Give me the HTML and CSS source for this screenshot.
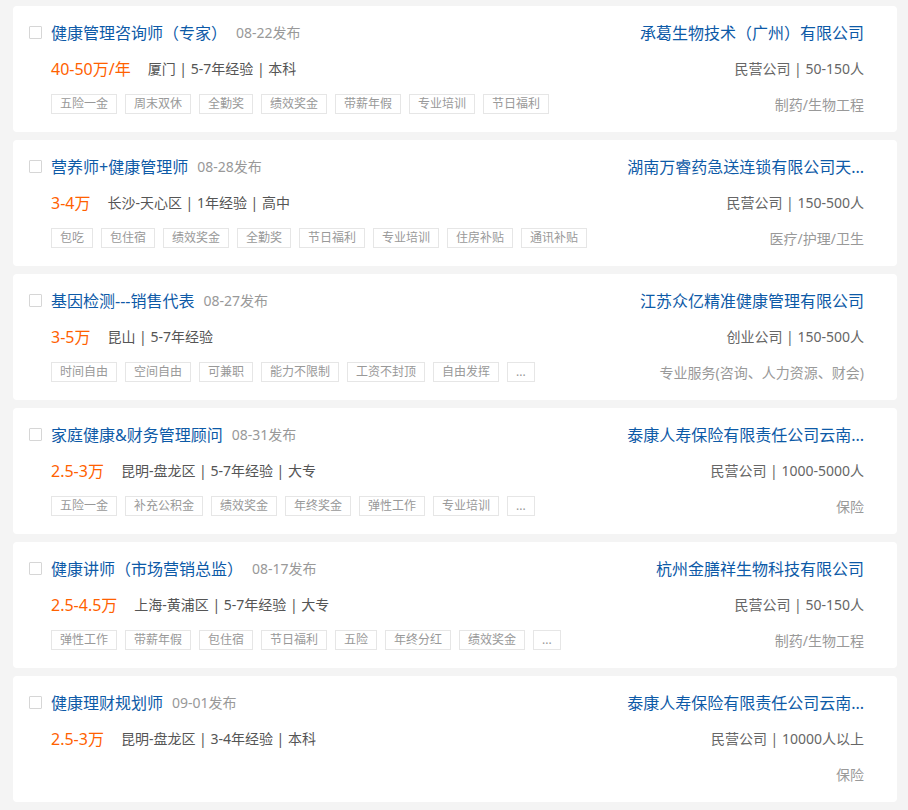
FILE: index.html
```html
<!DOCTYPE html>
<html lang="zh-CN">
<head>
<meta charset="utf-8">
<title>职位列表</title>
<link rel="stylesheet" href="styles.css">
</head>
<body>
<div class="list">

  <div class="card">
    <span class="check"></span>
    <div class="main">
      <div class="row"><a class="title">健康管理咨询师（专家）</a><span class="date">08-22发布</span></div>
      <div class="row"><span class="salary">40-50万/年</span><span class="meta">厦门 | 5-7年经验 | 本科</span></div>
      <div class="row tags"><span class="tag">五险一金</span><span class="tag">周末双休</span><span class="tag">全勤奖</span><span class="tag">绩效奖金</span><span class="tag">带薪年假</span><span class="tag">专业培训</span><span class="tag">节日福利</span></div>
    </div>
    <div class="side">
      <div class="row"><a class="company">承葛生物技术（广州）有限公司</a></div>
      <div class="row ctype">民营公司 | 50-150人</div>
      <div class="row industry">制药/生物工程</div>
    </div>
  </div>

  <div class="card">
    <span class="check"></span>
    <div class="main">
      <div class="row"><a class="title">营养师+健康管理师</a><span class="date">08-28发布</span></div>
      <div class="row"><span class="salary">3-4万</span><span class="meta">长沙-天心区 | 1年经验 | 高中</span></div>
      <div class="row tags"><span class="tag">包吃</span><span class="tag">包住宿</span><span class="tag">绩效奖金</span><span class="tag">全勤奖</span><span class="tag">节日福利</span><span class="tag">专业培训</span><span class="tag">住房补贴</span><span class="tag">通讯补贴</span></div>
    </div>
    <div class="side">
      <div class="row"><a class="company">湖南万睿药急送连锁有限公司天...</a></div>
      <div class="row ctype">民营公司 | 150-500人</div>
      <div class="row industry">医疗/护理/卫生</div>
    </div>
  </div>

  <div class="card">
    <span class="check"></span>
    <div class="main">
      <div class="row"><a class="title">基因检测---销售代表</a><span class="date">08-27发布</span></div>
      <div class="row"><span class="salary">3-5万</span><span class="meta">昆山 | 5-7年经验</span></div>
      <div class="row tags"><span class="tag">时间自由</span><span class="tag">空间自由</span><span class="tag">可兼职</span><span class="tag">能力不限制</span><span class="tag">工资不封顶</span><span class="tag">自由发挥</span><span class="tag">...</span></div>
    </div>
    <div class="side">
      <div class="row"><a class="company">江苏众亿精准健康管理有限公司</a></div>
      <div class="row ctype">创业公司 | 150-500人</div>
      <div class="row industry">专业服务(咨询、人力资源、财会)</div>
    </div>
  </div>

  <div class="card">
    <span class="check"></span>
    <div class="main">
      <div class="row"><a class="title">家庭健康&amp;财务管理顾问</a><span class="date">08-31发布</span></div>
      <div class="row"><span class="salary">2.5-3万</span><span class="meta">昆明-盘龙区 | 5-7年经验 | 大专</span></div>
      <div class="row tags"><span class="tag">五险一金</span><span class="tag">补充公积金</span><span class="tag">绩效奖金</span><span class="tag">年终奖金</span><span class="tag">弹性工作</span><span class="tag">专业培训</span><span class="tag">...</span></div>
    </div>
    <div class="side">
      <div class="row"><a class="company">泰康人寿保险有限责任公司云南...</a></div>
      <div class="row ctype">民营公司 | 1000-5000人</div>
      <div class="row industry">保险</div>
    </div>
  </div>

  <div class="card">
    <span class="check"></span>
    <div class="main">
      <div class="row"><a class="title">健康讲师（市场营销总监）</a><span class="date">08-17发布</span></div>
      <div class="row"><span class="salary">2.5-4.5万</span><span class="meta">上海-黄浦区 | 5-7年经验 | 大专</span></div>
      <div class="row tags"><span class="tag">弹性工作</span><span class="tag">带薪年假</span><span class="tag">包住宿</span><span class="tag">节日福利</span><span class="tag">五险</span><span class="tag">年终分红</span><span class="tag">绩效奖金</span><span class="tag">...</span></div>
    </div>
    <div class="side">
      <div class="row"><a class="company">杭州金膳祥生物科技有限公司</a></div>
      <div class="row ctype">民营公司 | 50-150人</div>
      <div class="row industry">制药/生物工程</div>
    </div>
  </div>

  <div class="card">
    <span class="check"></span>
    <div class="main">
      <div class="row"><a class="title">健康理财规划师</a><span class="date">09-01发布</span></div>
      <div class="row"><span class="salary">2.5-3万</span><span class="meta">昆明-盘龙区 | 3-4年经验 | 本科</span></div>
      <div class="row tags"></div>
    </div>
    <div class="side">
      <div class="row"><a class="company">泰康人寿保险有限责任公司云南...</a></div>
      <div class="row ctype">民营公司 | 10000人以上</div>
      <div class="row industry">保险</div>
    </div>
  </div>

</div>
</body>
</html>
```

FILE: styles.css
```css
html, body {
  margin: 0;
  padding: 0;
  background: #f4f4f4;
}

body {
  font-family: "Noto Sans", "Noto Sans CJK SC", sans-serif;
  color: #555;
}

.list {
  padding: 6px 11px 0 13px;
}

.card {
  display: flex;
  box-sizing: border-box;
  height: 126px;
  margin-bottom: 8px;
  padding: 8px 33px 10px 16px;
  background: #fff;
  border-radius: 4px;
}

.check {
  flex: none;
  box-sizing: border-box;
  width: 13px;
  height: 13px;
  margin: 12px 9px 0 0;
  border: 1px solid #d6d6d6;
  border-radius: 1px;
  background: #fff;
}

.main {
  flex: 1;
  min-width: 0;
}

.row {
  display: flex;
  align-items: center;
  height: 36px;
  white-space: nowrap;
}

.title {
  font-size: 16px;
  color: #0d5aa7;
  text-decoration: none;
}

.date {
  margin-left: 9px;
  font-size: 14px;
  color: #999;
}

.salary {
  margin-right: 17px;
  font-size: 16px;
  color: #ff6100;
}

.meta {
  font-size: 14px;
  color: #555;
}

.tags {
  gap: 8px;
}

.tag {
  box-sizing: border-box;
  height: 20px;
  line-height: 18px;
  padding: 0 8px;
  border: 1px solid #e6e6e6;
  font-size: 12px;
  color: #999;
}

.side {
  flex: none;
  display: flex;
  flex-direction: column;
  align-items: flex-end;
}

.side .row {
  justify-content: flex-end;
}

.company {
  display: block;
  font-size: 16px;
  color: #0d5aa7;
  text-decoration: none;
}

.ctype {
  font-size: 14px;
  color: #666;
}

.industry {
  font-size: 14px;
  color: #999;
}
```
